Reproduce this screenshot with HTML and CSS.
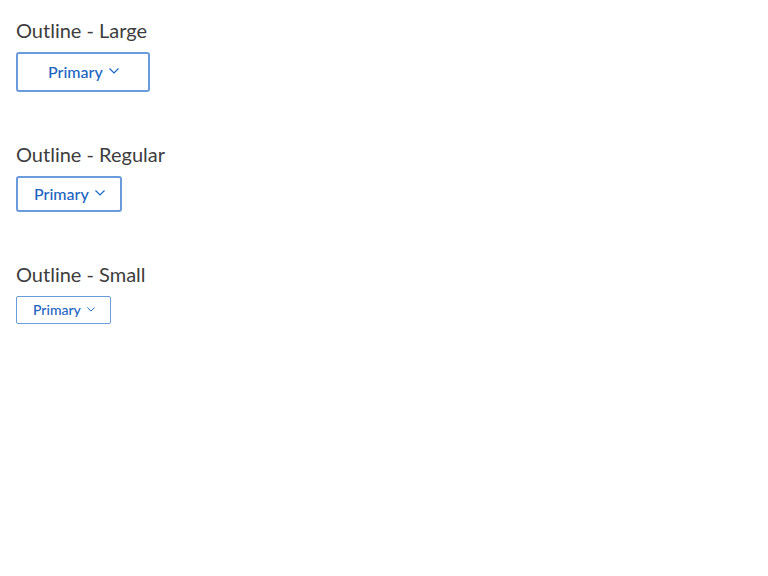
FILE: index.html
```html
<!DOCTYPE html>
<html>
<head>
<meta charset="utf-8">
<link rel="stylesheet" href="styles.css">
</head>
<body>
<section class="group">
  <h2 class="title">Outline - Large</h2>
  <button class="btn btn-large">Primary<svg class="chev" viewBox="0 0 10 6"><path d="M0.5 0.5 L5 5 L9.5 0.5"/></svg></button>
</section>
<section class="group">
  <h2 class="title">Outline - Regular</h2>
  <button class="btn btn-regular">Primary<svg class="chev" viewBox="0 0 10 6"><path d="M0.5 0.5 L5 5 L9.5 0.5"/></svg></button>
</section>
<section class="group">
  <h2 class="title">Outline - Small</h2>
  <button class="btn btn-small">Primary<svg class="chev" viewBox="0 0 10 6"><path d="M0.5 0.5 L5 5 L9.5 0.5"/></svg></button>
</section>
</body>
</html>
```
FILE: styles.css
```css
html, body {
  margin: 0;
  background: #fff;
}
body {
  padding: 18px 16px;
  font-family: Lato, "Liberation Sans", sans-serif;
  display: flex;
  flex-direction: column;
  align-items: flex-start;
  gap: 50px;
}
.group {
  display: flex;
  flex-direction: column;
  align-items: flex-start;
  gap: 10px;
}
.title {
  margin: 0;
  font-size: 20px;
  line-height: 24px;
  font-weight: 400;
  color: #3d3d3d;
}
.btn {
  display: inline-flex;
  align-items: center;
  gap: 6px;
  box-sizing: border-box;
  background: #fff;
  border: 2px solid #6a9bdb;
  border-radius: 3px;
  color: #1b64bf;
  font-family: Lato, "Liberation Sans", sans-serif;
  font-weight: 500;
  font-size: 16px;
  margin: 0;
  cursor: pointer;
}
.btn-large {
  height: 40px;
  padding: 0 29px 2px 30px;
}
.btn-regular {
  height: 36px;
  padding: 0 15px 2px 16px;
}
.btn-small {
  height: 28px;
  padding: 0 15px 2px 16px;
  border-width: 1px;
  border-radius: 2px;
  font-size: 14px;
}
.chev {
  width: 10px;
  height: 6px;
  fill: none;
  stroke: currentColor;
  stroke-width: 1.2;
}
.btn-small .chev {
  width: 8px;
  height: 5px;
}
```
